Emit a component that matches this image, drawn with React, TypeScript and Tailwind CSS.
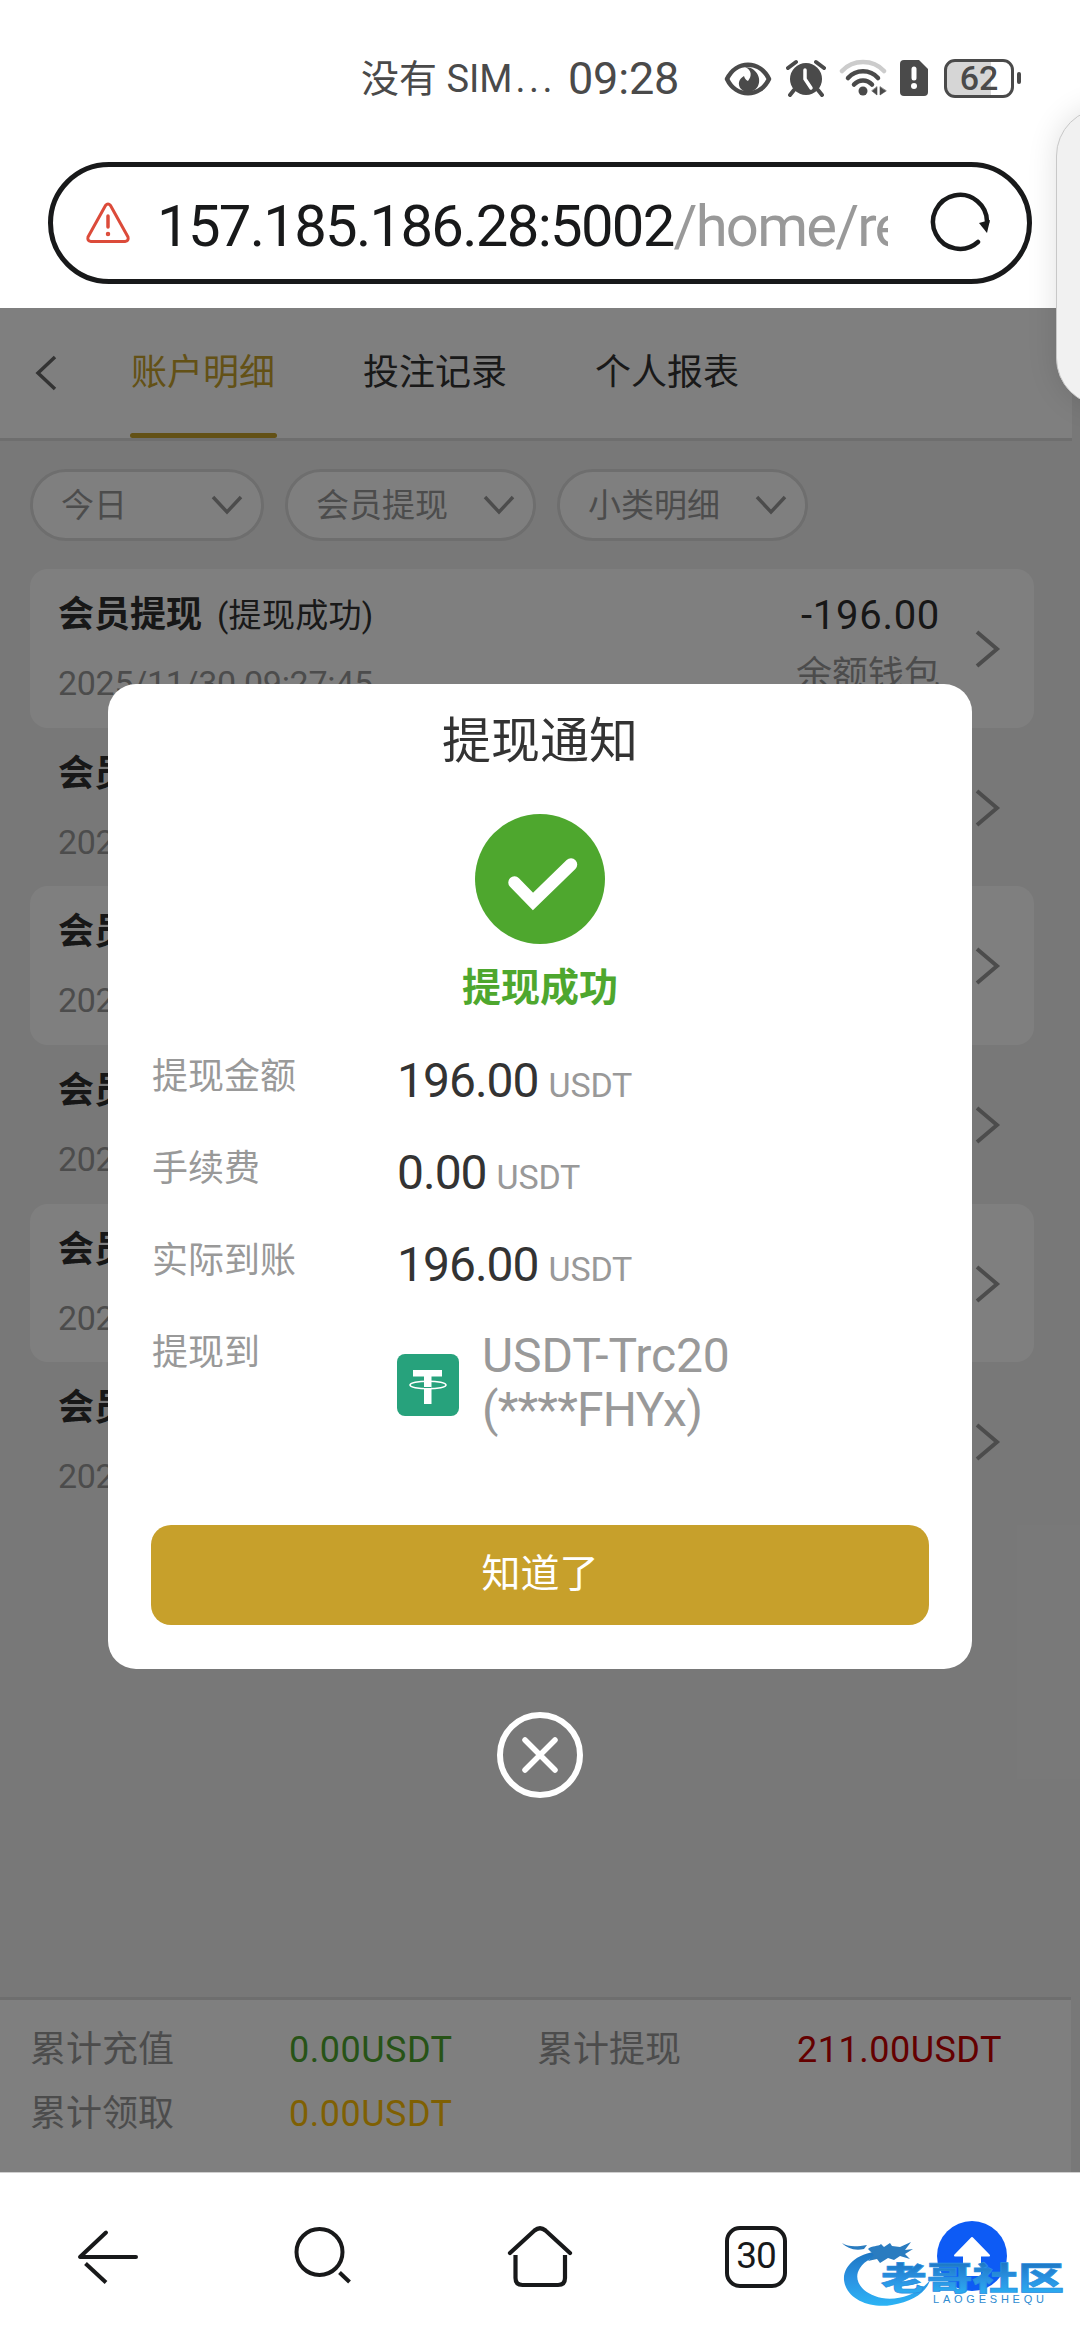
import { ReactNode } from "react";

const tabs = ["账户明细", "投注记录", "个人报表"];

const filters = [
  { label: "今日", width: "w-[234px]" },
  { label: "会员提现", width: "w-[251px]" },
  { label: "小类明细", width: "w-[251px]" },
];

const records = [1, 2, 3, 4, 5, 6];

const StatusBar = () => (
  <div className="h-[156px] shrink-0 flex items-center pl-[361px] text-[#4a4a4a]">
    <span className="w-[207px] pt-[2px] text-[38px] leading-none whitespace-nowrap">
      没有 SIM<span className="ml-[3px] tracking-[3.500px]">...</span>
    </span>
    <span className="w-[156px] pt-px text-[45px] leading-none tracking-[-0.2px]">09:28</span>
    <svg width="48" height="36" viewBox="0 0 48 36" className="mt-px">
      <path d="M3 18C12 -1 36 -1 45 18C36 37 12 37 3 18Z" fill="none" stroke="#4a4a4a" strokeWidth="4.5" strokeLinejoin="round" />
      <path d="M21 6c7 3 7 9 3 14-2-1-3-2-4-5-5 3-7 8-3 13 5 5 14 3 17-3 4-8-2-19-13-19Z" fill="#4a4a4a" />
    </svg>
    <svg width="40" height="38" viewBox="0 0 40 38" className="ml-[14px]">
      <circle cx="20" cy="20" r="16" fill="#4a4a4a" />
      <path d="M2 9l8-6M38 9l-8-6M8 31l-4 5M32 31l4 5" stroke="#4a4a4a" strokeWidth="4" strokeLinecap="round" />
      <path d="M19 11v9l6 9" fill="none" stroke="white" strokeWidth="3.5" strokeLinecap="round" />
    </svg>
    <svg width="48" height="38" viewBox="0 0 48 38" className="ml-[13px]" fill="none" strokeLinecap="round">
      <path d="M3 12C14 0 34 0 45 12" stroke="#cccccc" strokeWidth="4.5" />
      <path d="M9 19C17 10 31 10 39 19" stroke="#4a4a4a" strokeWidth="4.5" />
      <path d="M15 25.500C20 20 28 20 33 25.500" stroke="#4a4a4a" strokeWidth="4.5" />
      <circle cx="24" cy="32" r="4.500" fill="#4a4a4a" />
      <path d="M38 28v8l-5-4zM41 28v8l6-4z" fill="#4a4a4a" stroke="#4a4a4a" strokeWidth="0.6" />
    </svg>
    <svg width="28" height="36" viewBox="0 0 28 36" className="ml-[13px]">
      <path d="M4 0H19L28 9V32Q28 36 24 36H4Q0 36 0 32V4Q0 0 4 0Z" fill="#4a4a4a" />
      <path d="M14 9V18" stroke="white" strokeWidth="5" strokeLinecap="round" />
      <circle cx="14" cy="26" r="3" fill="white" />
    </svg>
    <div className="ml-[16px] w-[70px] h-[39px] rounded-[11px] border-[3px] border-[#4a4a4a] bg-[linear-gradient(90deg,#d6d6d6_68%,white_68%)] flex items-center justify-center text-[34px] font-medium leading-none">
      62
    </div>
    <div className="ml-[3px] w-[4px] h-[12px] rounded-full bg-[#4a4a4a]" />
  </div>
);

const AddressBar = () => (
  <div className="h-[152px] shrink-0 pl-12 pt-[6px]">
    <div className="w-[984px] h-[122px] rounded-full border-[5px] border-[#18191a] flex items-center pl-[32px]">
      <svg width="46" height="42" viewBox="0 0 46 42" fill="none" stroke="#dc4b3a" strokeLinecap="round" strokeLinejoin="round">
        <path d="M20.500 3.500Q23 0.500 25.500 3.500L43 35Q44 39 40 39.500H6Q2 39 3 35Z" strokeWidth="3" />
        <path d="M23 14V25" strokeWidth="3.500" />
        <circle cx="23" cy="32" r="1" strokeWidth="2.500" />
      </svg>
      <div className="ml-[26px] w-[731px] pt-[5px] overflow-hidden whitespace-nowrap text-[58px] leading-[80px] tracking-[-1.7px] text-[#18191a]">
        157.185.186.28:5002<span className="text-[#999] tracking-[-1.8px]">/home/re</span>
      </div>
      <svg width="62" height="62" viewBox="0 0 62 62" className="ml-[41px]">
        <path d="M49 50A27 27 0 1 1 58 31" fill="none" stroke="#18191a" strokeWidth="4.500" strokeLinecap="round" />
        <path d="M50 31L61 28L58 41Z" fill="#18191a" />
      </svg>
    </div>
  </div>
);

const TabHeader = () => (
  <div className="w-[1072px] h-[133px] bg-white border-b-[3px] border-[#dcdcdc] flex">
    <svg width="24" height="36" viewBox="0 0 24 36" className="ml-[34px] mt-[47px]" fill="none" stroke="#666" strokeWidth="3.500">
      <path d="M21 2L4 18L21 34" />
    </svg>
    <div className="ml-[72px] flex gap-[85px] text-[36px] leading-[130px] text-[#333]">
      {tabs.map((tab, i) => (
        <div key={tab} className={i === 0 ? "relative w-[147px] pl-px text-[#c7a22c]" : "w-[147px] pl-px"}>
          {tab}
          {i === 0 && <div className="absolute left-0 bottom-0 w-full h-[5px] rounded-full bg-[#c7a22c]" />}
        </div>
      ))}
    </div>
  </div>
);

const Filters = () => (
  <div className="mt-[28px] ml-[30px] flex gap-[21px]">
    {filters.map((f) => (
      <div
        key={f.label}
        className={`${f.width} h-[72px] rounded-full border-[3px] border-[#dcdcdc] bg-white pl-[28px] pr-[18px] flex items-center justify-between text-[33px] leading-none text-[#999]`}
      >
        {f.label}
        <svg width="32" height="20" viewBox="0 0 32 20" fill="none" stroke="#999" strokeWidth="3.500">
          <path d="M2 2L16 17L30 2" />
        </svg>
      </div>
    ))}
  </div>
);

const RecordRow = ({ odd }: { odd: boolean }) => (
  <div className={`h-[158.700px] rounded-[18px] pl-[28px] pr-[33px] flex ${odd ? "bg-white" : ""}`}>
    <div className="flex-1">
      <div className="mt-[24px] h-[44px] flex items-center text-[#333]">
        <span className="text-[36px] font-bold leading-none text-[#2e2e2e]">会员提现</span>
        <span className="ml-[15px] text-[33px] leading-none tracking-[0.3px]">(提现成功)</span>
      </div>
      <div className="mt-[24px] text-[34px] leading-[44px] tracking-[-0.3px] text-[#999]">2025/11/30 09:27:45</div>
    </div>
    <div className="text-right">
      <div className="mt-[25px] text-[40px] leading-[44px] tracking-[0.7px] text-[#2e2e2e]">-196.00</div>
      <div className="mt-[15px] text-[36px] leading-[44px] text-[#999]">余额钱包</div>
    </div>
    <svg width="26" height="40" viewBox="0 0 26 40" className="ml-[35px] mt-[60px]" fill="none" stroke="#999" strokeWidth="4">
      <path d="M2 3L22 20L2 37" />
    </svg>
  </div>
);

const Totals = () => (
  <div className="absolute left-0 bottom-0 w-[1071px] h-[175px] bg-white border-t-[3px] border-[#dcdcdc] pl-[30px] pt-[18px] grid grid-cols-[259px_248px_260px_247px] auto-rows-[64px] content-start items-center text-[36px] leading-none text-[#999]">
    <span>累计充值</span>
    <span className="tracking-[0.5px] text-[#4ea72e]">0.00USDT</span>
    <span>累计提现</span>
    <span className="tracking-[0.5px] text-[#c80000]">211.00USDT</span>
    <span>累计领取</span>
    <span className="tracking-[0.5px] text-[#ffc107]">0.00USDT</span>
  </div>
);

const Field = ({ label, children }: { label: string; children: ReactNode }) => (
  <div className="flex h-[92px]">
    <div className="w-[245px] pt-px text-[36px] leading-[48px] text-[#999]">{label}</div>
    {children}
  </div>
);

const Amount = ({ value }: { value: string }) => (
  <div className="pt-px text-[48px] leading-[56px] tracking-[-1px] text-[#333]">
    {value}
    <span className="ml-[10px] text-[34px] tracking-[-0.2px] text-[#999]">USDT</span>
  </div>
);

const TetherIcon = () => (
  <svg width="62" height="62" viewBox="0 0 62 62" className="mt-[26px] shrink-0">
    <rect width="62" height="62" rx="8" fill="#27a27c" />
    <path d="M16 16H45V22.500H34.500V50H27V22.500H16Z" fill="white" />
    <ellipse cx="31" cy="31" rx="18" ry="3.800" fill="none" stroke="white" strokeWidth="1.600" />
    <path d="M27 33.500h7.500" stroke="#27a27c" strokeWidth="1" />
  </svg>
);

const NoticeDialog = () => (
  <div className="absolute inset-0 bg-black/50 flex flex-col items-center pt-[376px]">
    <div className="w-[864px] h-[985px] shrink-0 rounded-[28px] bg-white flex flex-col items-center">
      <h2 className="mt-[28px] text-[49px] leading-[60px] text-[#333]">提现通知</h2>
      <svg width="130" height="130" viewBox="0 0 130 130" className="mt-[42px]">
        <circle cx="65" cy="65" r="65" fill="#4ea72e" />
        <path d="M39.500 68.500L58 87.500L96 50.500" fill="none" stroke="white" strokeWidth="12.500" strokeLinecap="round" />
      </svg>
      <div className="mt-[20px] text-[39px] font-bold leading-[48px] text-[#4ea72e]">提现成功</div>
      <div className="mt-[40px] w-full pl-[44px]">
        <Field label="提现金额">
          <Amount value="196.00" />
        </Field>
        <Field label="手续费">
          <Amount value="0.00" />
        </Field>
        <Field label="实际到账">
          <Amount value="196.00" />
        </Field>
        <Field label="提现到">
          <TetherIcon />
          <div className="ml-[23px] pt-px text-[48px] leading-[54px] tracking-[-0.1px] text-[#999]">
            USDT-Trc20
            <br />
            <span className="tracking-[-0.8px]">(****FHYx)</span>
          </div>
        </Field>
      </div>
      <button className="mt-[105px] pb-[2px] w-[778px] h-[100px] rounded-[20px] bg-[#c7a02b] text-[39px] leading-none text-white">
        知道了
      </button>
    </div>
    <svg width="86" height="86" viewBox="0 0 86 86" className="mt-[43px] shrink-0" fill="none" stroke="white" strokeWidth="6">
      <circle cx="43" cy="43" r="40" />
      <path d="M28 28L58 58M58 28L28 58" strokeWidth="5.500" strokeLinecap="round" />
    </svg>
  </div>
);

const Watermark = () => (
  <svg width="230" height="80" viewBox="0 0 230 80" className="absolute left-[840px] bottom-[18px]">
    <defs>
      <linearGradient id="wm" x1="0" y1="0" x2="0" y2="1">
        <stop offset="0" stopColor="#1c74c0" />
        <stop offset="0.5" stopColor="#2a92e2" />
        <stop offset="1" stopColor="#2cb4f5" />
      </linearGradient>
    </defs>
    <path d="M44 9C18 9 3 24 4 38C6 57 30 67 52 63C72 60 87 50 90 38C80 51 60 59 42 56C22 52 12 38 20 26C25 18 34 14 48 14Z" fill="url(#wm)" />
    <path
      d="M2 1C8 5 16 5 27 3L24 7C14 9 7 6 2 1ZM28 7C32 3 38 5 41 2L44 5L50 1L52 4L60 5L71 0L65 8L73 7L65 12L70 17L60 14L54 18L48 16L40 21L37 17L28 19L34 13Z"
      fill="#2a7cc0"
    />
    <g transform="translate(41 48) scale(1 0.7)">
      <text fontSize="45" fontWeight="900" textLength="183" lengthAdjust="spacingAndGlyphs" fill="url(#wm)" stroke="#2a8fe0" strokeWidth="1">
        老哥社区
      </text>
    </g>
    <text x="93" y="61" fontSize="11" textLength="111" fontFamily="Liberation Sans, sans-serif" fill="#2f8bd0">
      LAOGESHEQU
    </text>
  </svg>
);

const BottomNav = () => (
  <div className="relative h-[168px] shrink-0 border-t border-[#cfcfcf] bg-white flex items-start pt-[48px] text-[#18191a]">
    <svg width="64" height="72" viewBox="0 0 64 72" className="ml-[76px]" fill="none" stroke="currentColor" strokeWidth="4" strokeLinecap="round">
      <path d="M30 11.500L4 36H60" strokeLinejoin="round" />
      <path d="M9.500 42.500L30 61.500" strokeLinecap="butt" />
    </svg>
    <svg width="62" height="72" viewBox="0 0 62 72" className="ml-[152px]" fill="none" stroke="currentColor" strokeWidth="4">
      <circle cx="27.500" cy="31" r="23" />
      <path d="M47.500 51.500L57.500 61" />
    </svg>
    <svg width="68" height="72" viewBox="0 0 68 72" className="ml-[152px]" fill="none" stroke="currentColor" strokeWidth="4.200" strokeLinecap="round">
      <path d="M4 32L28.500 9.500Q34 5 39.500 9.500L64 32" />
      <path d="M9.500 34V57Q9.500 64 16.500 64H52Q59 64 59 57V34" strokeLinecap="butt" />
    </svg>
    <div className="mt-[5px] ml-[151px] w-[62px] h-[62px] rounded-[15px] border-[4.500px] border-[#18191a] flex items-center justify-center text-[37px] leading-none tracking-[-1px] pb-[4px]">
      30
    </div>
    <div className="ml-[150px] w-[70px] h-[70px] rounded-full bg-[#0d5bf5] flex justify-center">
      <svg width="70" height="70" viewBox="0 0 70 70">
        <path d="M35 17L52 34.500H43V54H27V34.500H18Z" fill="white" stroke="white" strokeWidth="2" strokeLinejoin="round" />
      </svg>
    </div>
    <Watermark />
  </div>
);

const App = () => {
  return (
    <div className="relative w-[1080px] h-[2340px] overflow-hidden bg-white flex flex-col font-['Roboto','Noto_Sans_CJK_SC',sans-serif]">
      <StatusBar />
      <AddressBar />

      <main className="relative h-[1864px] shrink-0 overflow-hidden bg-[#f1f1f1]">
        <TabHeader />
        <Filters />
        <div className="ml-[30px] mt-[28px] w-[1004px]">
          {records.map((n) => (
            <RecordRow key={n} odd={n % 2 === 1} />
          ))}
        </div>
        <Totals />
        <NoticeDialog />
      </main>

      <BottomNav />

      {/* Edge panel peeking in from the right */}
      <div className="absolute left-[1056px] top-[108px] w-[120px] h-[298px] rounded-[48px] border border-[#c8c8c8] bg-[#f1f1f1] shadow-[0_0_30px_rgba(0,0,0,0.12)]" />
    </div>
  );
};

export default App;
